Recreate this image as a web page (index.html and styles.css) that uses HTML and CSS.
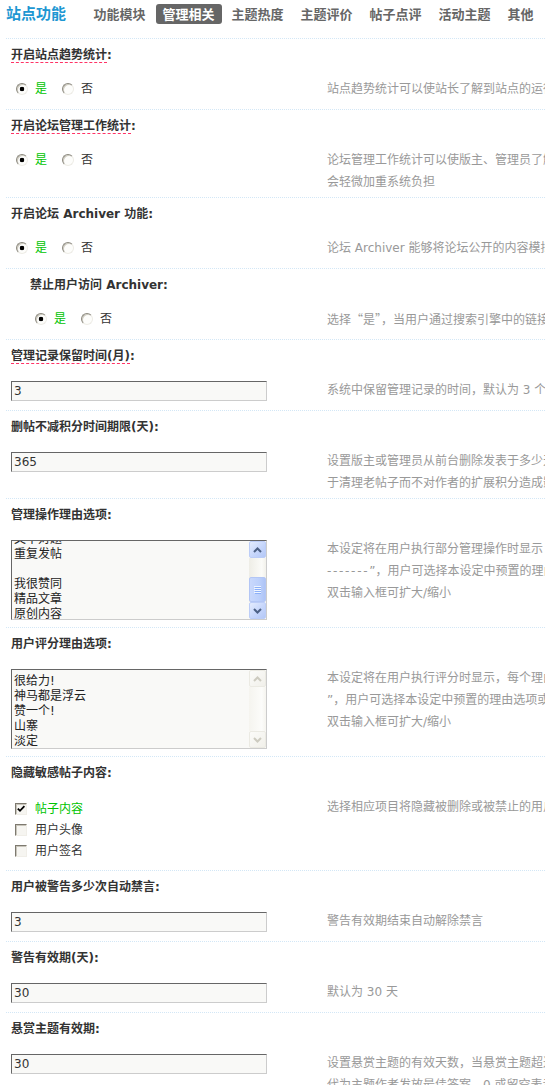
FILE: index.html
```html
<!DOCTYPE html>
<html lang="zh-CN">
<head>
<meta charset="utf-8">
<title>站点功能 - 管理相关</title>
<link rel="stylesheet" href="styles.css">
</head>
<body>
<div class="page">
  <div class="header">
    <h1 class="title">站点功能</h1>
    <ul class="tabs">
      <li><a>功能模块</a></li>
      <li class="current"><a>管理相关</a></li>
      <li><a>主题热度</a></li>
      <li><a>主题评价</a></li>
      <li><a>帖子点评</a></li>
      <li><a>活动主题</a></li>
      <li><a>其他</a></li>
    </ul>
  </div>

  <div class="setting">
    <div class="lbl"><span class="tip">开启站点趋势统计</span>:</div>
    <div class="content">
      <div class="field">
        <div class="radios">
          <label class="opt on"><input class="rd" type="radio" name="r1" checked>是</label>
          <label class="opt"><input class="rd" type="radio" name="r1">否</label>
        </div>
      </div>
      <div class="tips">站点趋势统计可以使站长了解到站点的运行状况。注意: 此功能会轻微加重系统负担</div>
    </div>
  </div>

  <div class="setting">
    <div class="lbl"><span class="tip">开启论坛管理工作统计</span>:</div>
    <div class="content">
      <div class="field">
        <div class="radios">
          <label class="opt on"><input class="rd" type="radio" name="r2" checked>是</label>
          <label class="opt"><input class="rd" type="radio" name="r2">否</label>
        </div>
      </div>
      <div class="tips">论坛管理工作统计可以使版主、管理员了解论坛的管理工作状况。注意: 此功能<br>会轻微加重系统负担</div>
    </div>
  </div>

  <div class="setting">
    <div class="lbl">开启论坛 Archiver 功能:</div>
    <div class="content">
      <div class="field">
        <div class="radios">
          <label class="opt on"><input class="rd" type="radio" name="r3" checked>是</label>
          <label class="opt"><input class="rd" type="radio" name="r3">否</label>
        </div>
      </div>
      <div class="tips">论坛 Archiver 能够将论坛公开的内容模拟成静态页面，以便搜索引擎获取其中的内容</div>
    </div>
  </div>

  <div class="setting sub">
    <div class="lbl">禁止用户访问 Archiver:</div>
    <div class="content">
      <div class="field">
        <div class="radios">
          <label class="opt on"><input class="rd" type="radio" name="r4" checked>是</label>
          <label class="opt"><input class="rd" type="radio" name="r4">否</label>
        </div>
      </div>
      <div class="tips">选择<span class="cjk">“是”</span>，当用户通过搜索引擎中的链接访问 Archiver 页面时将跳转到论坛页面</div>
    </div>
  </div>

  <div class="setting">
    <div class="lbl"><span class="tip">管理记录保留时间(月)</span>:</div>
    <div class="content">
      <div class="field"><input class="txt" type="text" value="3"></div>
      <div class="tips">系统中保留管理记录的时间，默认为 3 个月，建议在 3～6 个月的范围内取值</div>
    </div>
  </div>

  <div class="setting">
    <div class="lbl">删帖不减积分时间期限(天):</div>
    <div class="content">
      <div class="field"><input class="txt" type="text" value="365"></div>
      <div class="tips">设置版主或管理员从前台删除发表于多少天以前的帖子时，不更新用户的扩展积分，可用<br>于清理老帖子而不对作者的扩展积分造成影响，0 为不使用此功能，默认为 0</div>
    </div>
  </div>

  <div class="setting">
    <div class="lbl">管理操作理由选项:</div>
    <div class="content">
      <div class="field">
        <div class="ta">
          <div class="ta-text">
            <div class="ta-lines scrolled">
              <div class="ln">文不对题</div>
              <div class="ln">重复发帖</div>
              <div class="ln"></div>
              <div class="ln">我很赞同</div>
              <div class="ln">精品文章</div>
              <div class="ln">原创内容</div>
            </div>
          </div>
          <div class="sb">
            <div class="sb-btn"><svg width="9" height="6" viewBox="0 0 9 6"><path d="M1 5 L4.5 1.5 L8 5" stroke="#4d6185" stroke-width="2" fill="none"/></svg></div>
            <div class="sb-track">
              <div class="sb-thumb"><svg width="7" height="8" viewBox="0 0 7 8"><path d="M0 .5h7M0 2.5h7M0 4.5h7M0 6.5h7" stroke="#eef4fe"/><path d="M1 1.5h7M1 3.5h7M1 5.5h7M1 7.5h7" stroke="#8cb0f8"/></svg></div>
            </div>
            <div class="sb-btn"><svg width="9" height="6" viewBox="0 0 9 6"><path d="M1 1 L4.5 4.5 L8 1" stroke="#4d6185" stroke-width="2" fill="none"/></svg></div>
          </div>
        </div>
      </div>
      <div class="tips">本设定将在用户执行部分管理操作时显示 每个理由一行，如果空行则显示一行分隔符“-<br><span class="dash">-------</span>”，用户可选择本设定中预置的理由选项或自行输入<br>双击输入框可扩大/缩小</div>
    </div>
  </div>

  <div class="setting">
    <div class="lbl">用户评分理由选项:</div>
    <div class="content">
      <div class="field">
        <div class="ta">
          <div class="ta-text">
            <div class="ta-lines">
              <div class="ln">很给力!</div>
              <div class="ln">神马都是浮云</div>
              <div class="ln">赞一个!</div>
              <div class="ln">山寨</div>
              <div class="ln">淡定</div>
            </div>
          </div>
          <div class="sb disabled">
            <div class="sb-btn"><svg width="9" height="6" viewBox="0 0 9 6"><path d="M1 5 L4.5 1.5 L8 5" stroke="#cdcbc0" stroke-width="2" fill="none"/></svg></div>
            <div class="sb-track"></div>
            <div class="sb-btn"><svg width="9" height="6" viewBox="0 0 9 6"><path d="M1 1 L4.5 4.5 L8 1" stroke="#cdcbc0" stroke-width="2" fill="none"/></svg></div>
          </div>
        </div>
      </div>
      <div class="tips">本设定将在用户执行评分时显示，每个理由一行，如果空行则显示一行分隔符“--------<br>”，用户可选择本设定中预置的理由选项或自行输入<br>双击输入框可扩大/缩小</div>
    </div>
  </div>

  <div class="setting">
    <div class="lbl">隐藏敏感帖子内容:</div>
    <div class="content">
      <div class="field">
        <div class="checks">
          <label class="ck on"><span class="box"><svg width="10" height="10" viewBox="0 0 10 10"><path d="M1.8 4.6 L4 6.8 L8.4 2.2" stroke="#000" stroke-width="1.8" fill="none"/></svg></span>帖子内容</label>
          <label class="ck"><span class="box"></span>用户头像</label>
          <label class="ck"><span class="box"></span>用户签名</label>
        </div>
      </div>
      <div class="tips">选择相应项目将隐藏被删除或被禁止的用户所发表的帖子内容、头像和签名</div>
    </div>
  </div>

  <div class="setting">
    <div class="lbl">用户被警告多少次自动禁言:</div>
    <div class="content">
      <div class="field"><input class="txt" type="text" value="3"></div>
      <div class="tips">警告有效期结束自动解除禁言</div>
    </div>
  </div>

  <div class="setting">
    <div class="lbl">警告有效期(天):</div>
    <div class="content">
      <div class="field"><input class="txt" type="text" value="30"></div>
      <div class="tips">默认为 30 天</div>
    </div>
  </div>

  <div class="setting">
    <div class="lbl">悬赏主题有效期:</div>
    <div class="content">
      <div class="field"><input class="txt" type="text" value="30"></div>
      <div class="tips">设置悬赏主题的有效天数，当悬赏主题超过有效天数后，如果提问者未选择最佳答案，系统将<br>代为主题作者发放最佳答案，0 或留空表示不限制</div>
    </div>
  </div>
</div>
</body>
</html>
```

FILE: styles.css
```css
html, body {
  margin: 0;
  padding: 0;
  overflow: hidden;
  background: #fff;
}

body {
  font-family: "DejaVu Sans", "Noto Sans CJK SC", sans-serif;
  font-size: 12px;
  color: #333;
}

.page {
  padding-left: 6px;
}

/* header */
.header {
  display: flex;
  align-items: center;
  height: 20px;
  padding: 4px 0 14px;
  white-space: nowrap;
}

.title {
  margin: -2px 19px 0 0;
  font-size: 15px;
  font-weight: bold;
  line-height: 20px;
  color: #1e97d2;
  font-family: "Noto Sans CJK SC", sans-serif;
  flex: none;
}

.tabs {
  display: flex;
  margin: 0;
  padding: 0;
  list-style: none;
  flex: none;
}

.tabs li {
  margin: 0 1.5px;
}

.tabs a {
  display: block;
  height: 20px;
  padding: 0 7px;
  line-height: 20px;
  font-family: "Noto Sans CJK SC", sans-serif;
  font-size: 13px;
  font-weight: bold;
  color: #666;
  border-radius: 3px;
}

.tabs .current a {
  background: #666;
  color: #fff;
}

/* settings */
.setting {
  border-top: 1px dotted #d3e7f6;
}

.lbl {
  height: 33px;
  line-height: 33px;
  padding-left: 5px;
  font-weight: bold;
  color: #333;
  white-space: nowrap;
}

.tip {
  border-bottom: 1px dashed #f36;
}

.content {
  display: flex;
  min-height: 27px;
  padding: 6px 0 4px;
}

.field {
  flex: 0 0 321px;
  box-sizing: border-box;
  padding-left: 5px;
  line-height: 22px;
}

.sub .lbl,
.sub .field {
  padding-left: 24px;
}

.tips {
  flex: none;
  color: #999;
  line-height: 22px;
  white-space: nowrap;
}

.cjk {
  font-family: "Noto Sans CJK SC", sans-serif;
}

.dash {
  letter-spacing: 1.7px;
}

/* radios */
.radios {
  display: flex;
  height: 22px;
  align-items: center;
}

.opt {
  display: inline-flex;
  align-items: center;
  margin-right: 10px;
  color: #333;
}

.opt.on {
  color: #00c400;
}

.rd {
  -webkit-appearance: none;
  appearance: none;
  box-sizing: border-box;
  width: 12px;
  height: 12px;
  margin: 0 7px 0 5px;
  border-radius: 50%;
  border: 1px solid;
  border-color: #8c897f #eeece6 #eeece6 #8c897f;
  box-shadow: inset 1px 1px 0 #cfccc2;
  background: #fdfdfb;
}

.rd:checked {
  background: radial-gradient(circle at 50% 50%, #000 0 2px, #fdfdfb 2.6px);
}

/* inputs */
.txt {
  box-sizing: border-box;
  width: 256px;
  height: 20px;
  margin: 0;
  padding: 0 2px;
  border: 1px solid #ccc;
  border-top-color: #666;
  border-left-color: #666;
  background: #f9f9f7;
  font-family: "DejaVu Sans", "Noto Sans CJK SC", sans-serif;
  font-size: 12px;
  color: #333;
  vertical-align: middle;
}

/* fake textarea */
.ta {
  display: flex;
  box-sizing: border-box;
  width: 256px;
  height: 80px;
  margin: 2px 0 3px;
  border: 1px solid #ccc;
  border-top-color: #666;
  border-left-color: #666;
  background: #f9f9f7;
}

.ta-text {
  flex: 1;
  overflow: hidden;
  padding: 4px 2px;
  line-height: 15px;
  color: #222;
}

.ta-lines.scrolled {
  margin-top: -13px;
}

.ln {
  height: 15px;
  white-space: nowrap;
}

.sb {
  display: flex;
  flex-direction: column;
  width: 17px;
  flex: none;
}

.sb-btn {
  display: flex;
  align-items: center;
  justify-content: center;
  box-sizing: border-box;
  height: 17px;
  flex: none;
  border: 1px solid #bccdf7;
  border-radius: 2px;
  background: linear-gradient(135deg, #e4ecfe 0%, #c6d6fb 55%, #b4c8f7 100%);
}

.sb-track {
  flex: 1;
  background: linear-gradient(90deg, #eeede6, #fbfbf8 75%, #f2f1eb);
}

.sb-thumb {
  display: flex;
  align-items: center;
  justify-content: center;
  box-sizing: border-box;
  height: 25px;
  margin-top: 19px;
  border: 1px solid #b3c6f5;
  border-radius: 2px;
  background: linear-gradient(90deg, #c9d8fc 0%, #bcd0fb 60%, #aec4f6 100%);
}

.sb.disabled .sb-btn {
  border-color: #ebeae3;
  background: linear-gradient(135deg, #fbfbf9, #f1f0ea);
}

.sb.disabled .sb-track {
  background: linear-gradient(90deg, #f5f4ef, #fcfcfa 75%, #f5f4ef);
}

/* checkboxes */
.checks {
  padding: 2px 0 5px;
}

.ck {
  display: flex;
  align-items: center;
  height: 21px;
  color: #333;
}

.ck.on {
  color: #00c400;
}

.box {
  display: flex;
  align-items: center;
  justify-content: center;
  box-sizing: border-box;
  width: 12px;
  height: 12px;
  margin: 0 8px 0 4px;
  border: 1px solid;
  border-color: #7d796f #f0eee8 #f0eee8 #7d796f;
  box-shadow: inset 1px 1px 0 #c9c6bc;
  background: #f6f5f1;
}
```
